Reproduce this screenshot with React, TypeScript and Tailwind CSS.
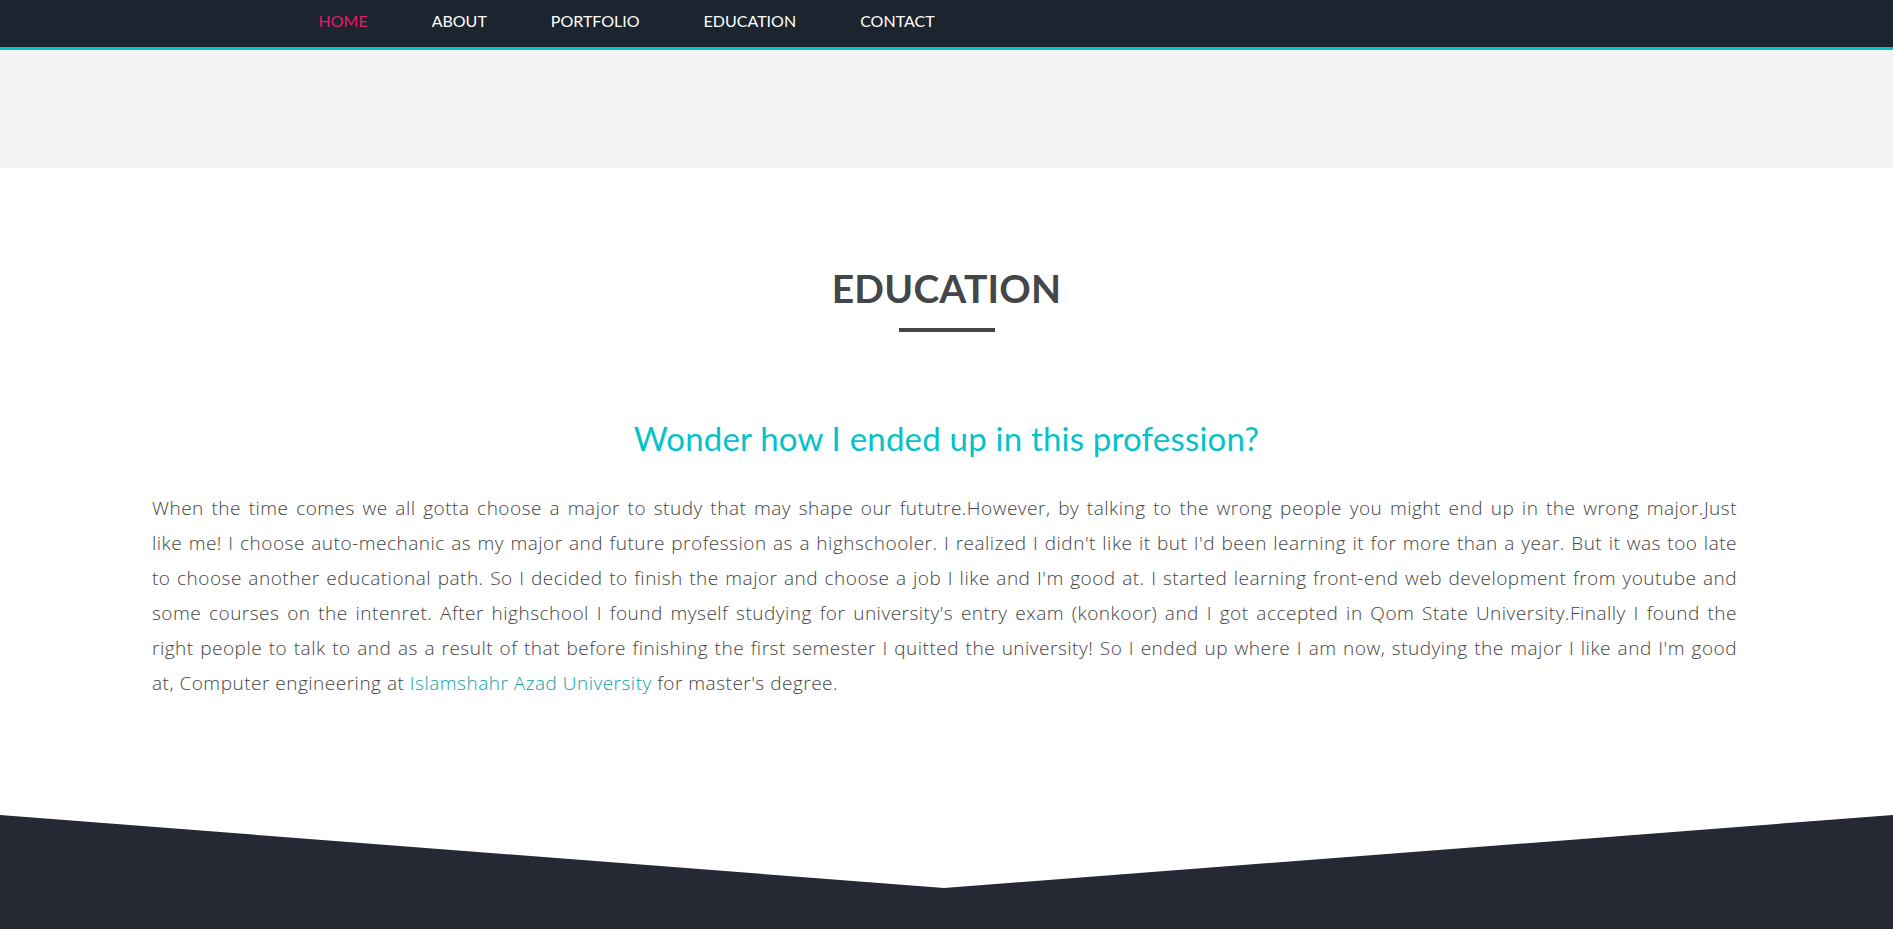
import React from "react";

const lines = [
  "When the time comes we all gotta choose a major to study that may shape our fututre.However, by talking to the wrong people you might end up in the wrong major.Just",
  "like me! I choose auto-mechanic as my major and future profession as a highschooler. I realized I didn't like it but I'd been learning it for more than a year. But it was too late",
  "to choose another educational path. So I decided to finish the major and choose a job I like and I'm good at. I started learning front-end web development from youtube and",
  "some courses on the intenret. After highschool I found myself studying for university's entry exam (konkoor) and I got accepted in Qom State University.Finally I found the",
  "right people to talk to and as a result of that before finishing the first semester I quitted the university! So I ended up where I am now, studying the major I like and I'm good",
];

export default function App() {
  const nav = ["HOME", "ABOUT", "PORTFOLIO", "EDUCATION", "CONTACT"];
  return (
    <div className="min-h-screen bg-white font-['Lato','Open_Sans',sans-serif]">
      <nav className="bg-[#1b242f] border-b-[3px] border-[#04c2c9]">
        <div className="max-w-[1320px] mx-auto h-[47px] flex items-center pb-[5px]">
          <ul className="flex">
            {nav.map((n, i) => (
              <li
                key={n}
                className={`px-8 text-[16px] ${i === 0 ? "text-[#e31b6d]" : "text-white"}`}
              >
                {n}
              </li>
            ))}
          </ul>
        </div>
      </nav>
      <div className="h-[118px] bg-[#f4f4f4]" />
      <section className="pt-[96px] h-[647px]">
        <h2 className="text-center text-[39px] leading-[48px] font-bold text-[#444649] tracking-[0.2px]">
          EDUCATION
        </h2>
        <div className="mx-auto mt-[16px] w-24 h-1 bg-[#444649]" />
        <h3 className="mt-[86px] text-center text-[33px] leading-[40px] text-[#04c2c9] tracking-[0.2px]">
          Wonder how I ended up in this profession?
        </h3>
        <div className="mx-auto mt-[33px] w-[1585px] -translate-x-[2px] font-['Open_Sans','Lato',sans-serif] font-light text-[19px] leading-[35px] tracking-[0.5px] text-[#444444]">
          {lines.map((l, i) => (
            <span key={i} className="block whitespace-nowrap text-justify [text-align-last:justify]">
              {l}
            </span>
          ))}
          <span className="block">
            at, Computer engineering at{" "}
            <a className="text-[#0fa1a6]">Islamshahr Azad University</a> for master's degree.
          </span>
        </div>
      </section>
      <footer className="bg-[#252934] h-[116px]">
        <svg className="block w-full h-[73px]" viewBox="0 0 1893 73" preserveAspectRatio="none">
          <polygon points="0,0 1893,0 944,73" fill="#ffffff" />
        </svg>
      </footer>
    </div>
  );
}
